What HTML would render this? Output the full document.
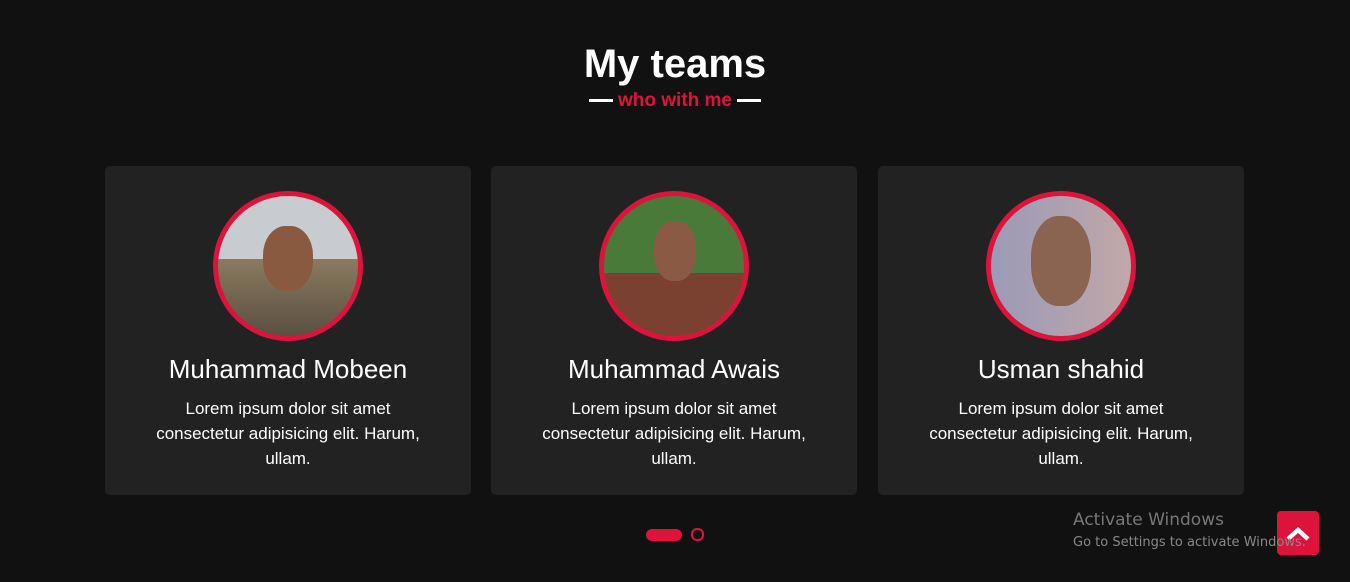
<!DOCTYPE html><html><head><style>
body{margin:0;width:1350px;height:582px;background:#111;font-family:"Liberation Sans",sans-serif;position:relative;overflow:hidden;color:#fff}
h1{position:absolute;top:42px;left:0;width:1350px;text-align:center;margin:0;font-size:40px;font-weight:bold}
.sub{position:absolute;top:90px;left:0;width:1350px;text-align:center;color:#dc143c;font-weight:bold;font-size:19px}
.sub span{display:inline-block;width:24px;height:3px;background:#fff;vertical-align:middle;margin:0 5px}
.card{position:absolute;top:166px;width:366px;height:329px;background:#222;border-radius:5px;text-align:center}
.av{position:absolute;left:108px;top:25px;width:140px;height:140px;border:5px solid #dc143c;border-radius:50%;overflow:hidden}
.name{position:absolute;top:188px;width:100%;font-size:26px}
.txt{position:absolute;top:230px;left:10px;right:10px;font-size:17px;line-height:25px}
.dot{position:absolute;top:529px;height:12px;border-radius:6px}
</style></head><body>
<h1>My teams</h1>
<div class="sub"><span></span>who with me<span></span></div>
<div class="card" style="left:105px"><div class="av" style="background:linear-gradient(#c8ccd0 0 45%,#8a7a60 45%,#5a5040)"><div style="position:absolute;left:45px;top:30px;width:50px;height:65px;border-radius:45%;background:#8a5a40"></div></div><div class="name">Muhammad Mobeen</div><div class="txt">Lorem ipsum dolor sit amet<br>consectetur adipisicing elit. Harum,<br>ullam.</div></div>
<div class="card" style="left:491px"><div class="av" style="background:linear-gradient(#4a7a3a 0 55%,#7a4030 55%)"><div style="position:absolute;left:50px;top:25px;width:42px;height:60px;border-radius:45%;background:#8a5a44"></div></div><div class="name">Muhammad Awais</div><div class="txt">Lorem ipsum dolor sit amet<br>consectetur adipisicing elit. Harum,<br>ullam.</div></div>
<div class="card" style="left:878px"><div class="av" style="background:linear-gradient(90deg,#9a9ab8,#c0a8a8)"><div style="position:absolute;left:40px;top:20px;width:60px;height:90px;border-radius:45%;background:#8a6450"></div></div><div class="name">Usman shahid</div><div class="txt">Lorem ipsum dolor sit amet<br>consectetur adipisicing elit. Harum,<br>ullam.</div></div>
<div class="dot" style="left:646px;width:36px;background:#dc143c"></div>
<div class="dot" style="left:691px;width:9px;height:9px;border:2px solid #dc143c;box-sizing:content-box;top:528px"></div>
<div style="position:absolute;left:1277px;top:511px;width:42px;height:44px;background:#dc143c;border-radius:4px"><svg width="42" height="44"><path d="M11 28 L21 19 L31 28" stroke="#fff" stroke-width="4.5" fill="none"/></svg></div>
<div style="position:absolute;z-index:2;left:1073px;top:510px;color:#777;font-size:17px;font-family:'DejaVu Sans',sans-serif">Activate Windows</div>
<div style="position:absolute;z-index:2;left:1073px;top:535px;color:#888;font-size:13px;font-family:'DejaVu Sans',sans-serif;white-space:nowrap">Go to Settings to activate Windows.</div>
</body></html>
